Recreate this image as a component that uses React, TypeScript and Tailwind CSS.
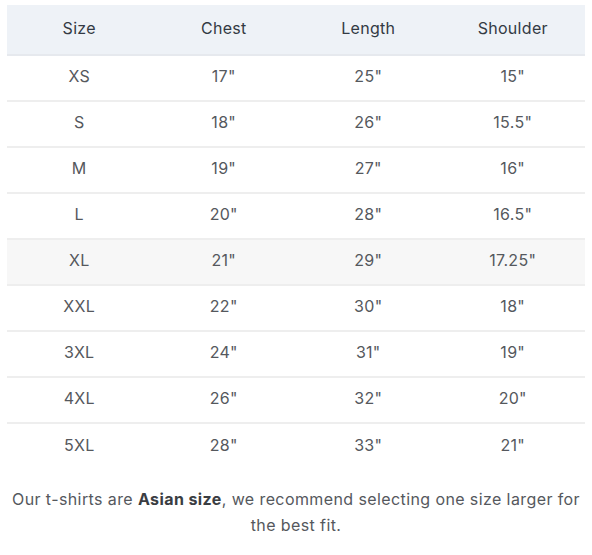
const rows = [
  ["XS", '17"', '25"', '15"'],
  ["S", '18"', '26"', '15.5"'],
  ["M", '19"', '27"', '16"'],
  ["L", '20"', '28"', '16.5"'],
  ["XL", '21"', '29"', '17.25"'],
  ["XXL", '22"', '30"', '18"'],
  ["3XL", '24"', '31"', '19"'],
  ["4XL", '26"', '32"', '20"'],
  ["5XL", '28"', '33"', '21"'],
];

export default function App() {
  return (
    <div className="bg-white px-[7px] pt-[5px] font-['Inter',sans-serif] text-[16px] tracking-[0.3px]">
      <table className="w-full table-fixed border-collapse text-center">
        <thead>
          <tr className="h-[50px] border-b-2 border-[#e6e9ee] bg-[#eef2f7] text-[#333a44]">
            <th className="pb-[4px] font-normal">Size</th>
            <th className="pb-[4px] font-normal">Chest</th>
            <th className="pb-[4px] font-normal">Length</th>
            <th className="pb-[4px] font-normal">Shoulder</th>
          </tr>
        </thead>
        <tbody className="text-[#55585d]">
          {rows.map((r, i) => (
            <tr
              key={r[0]}
              className={`h-[46px] ${i < rows.length - 1 ? "border-b-2 border-[#eeeeee]" : ""} ${
                r[0] === "XL" ? "bg-[#f7f7f7]" : ""
              }`}
            >
              {r.map((c, j) => (
                <td key={j} className="pb-[4px]">
                  {c}
                </td>
              ))}
            </tr>
          ))}
        </tbody>
      </table>
      <p className="mt-[17px] text-center leading-[26px] tracking-[0.4px] text-[#55585d]">
        Our t-shirts are <b className="font-bold text-[#3a3d42]">Asian size</b>, we recommend selecting one size larger for the best fit.
      </p>
    </div>
  );
}
